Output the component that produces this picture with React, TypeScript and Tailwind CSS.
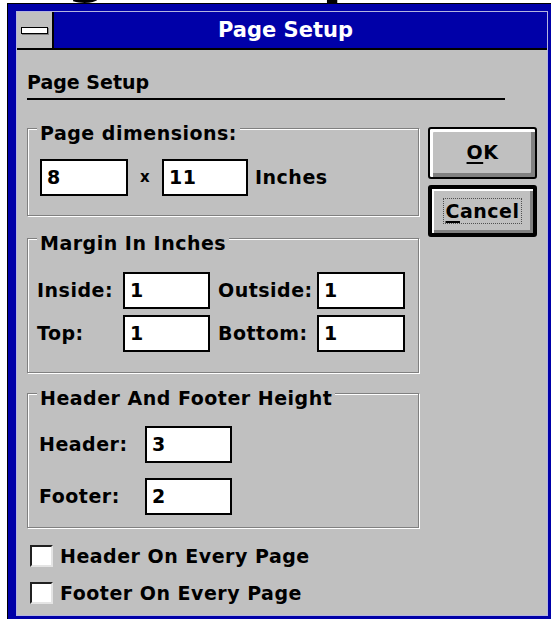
import React from 'react';

type FieldProps = { value: string; width: string };

// Sunken white edit box with a heavy black frame
const Field: React.FC<FieldProps> = ({ value, width }) => (
  <div className={`${width} h-[37px] border-2 border-black bg-white flex items-center pl-[5px] leading-none`}>
    {value}
  </div>
);

type GroupProps = { title: string; className: string; children: React.ReactNode };

// Etched group frame, the title sits on the top line
const GroupBox: React.FC<GroupProps> = ({ title, className, children }) => (
  <div className={`border border-[#808080] shadow-[inset_1px_1px_0_#ffffff,1px_1px_0_#ffffff] ${className}`}>
    <div className="mt-[-7px] ml-[9px] w-fit bg-[#c0c0c0] px-[3px] leading-[22px]">{title}</div>
    {children}
  </div>
);

const CheckRow: React.FC<{ label: string }> = ({ label }) => (
  <div className="flex items-center gap-[7px] h-[22px]">
    <div className="w-[23px] h-[22px] bg-white border-t-2 border-l-2 border-[#202020] border-r-2 border-b-2 border-r-[#e4e4e4] border-b-[#e4e4e4]" />
    <span className="leading-[22px]">{label}</span>
  </div>
);

export default function App() {
  return (
    <div className="min-h-screen bg-white font-['DejaVu_Sans',sans-serif] font-bold text-[19px] tracking-[0.5px] text-black overflow-hidden">
      {/* bottom of the page heading behind the dialog */}
      <div className="h-[3px] overflow-hidden">
        <div className="mt-[-59px] ml-[-15px] text-[59px] tracking-normal leading-none whitespace-nowrap">Page Setup</div>
      </div>

      {/* window frame */}
      <div className="ml-[7px] border-l border-t border-black bg-[#0000a8] pl-[8px] pt-[7px] pr-[3px] pb-[3px]">
        <div className="border border-[#b4b4e0]">
          {/* caption bar */}
          <div className="h-[38px] flex border-b-2 border-black bg-[#0000a8]">
            <div className="w-[37px] bg-[#c0c0c0] border-r-2 border-black flex items-center justify-center">
              <div className="w-[27px] h-[7px] bg-white border border-black shadow-[1px_1px_0_#808080]" />
            </div>
            <div className="flex-1 flex items-center justify-center pr-[30px] text-white text-[21px] tracking-normal leading-none">
              Page Setup
            </div>
          </div>

          {/* client area */}
          <div className="h-[565px] bg-[#c0c0c0] pl-[10px] pt-[21px]">
            <div className="leading-[22px] tracking-normal">Page Setup</div>
            <div className="mt-[5px] w-[478px] h-[2px] bg-black" />

            <div className="flex mt-[28px]">
              <div className="w-[392px] flex flex-col">
                <GroupBox title="Page dimensions:" className="h-[88px]">
                  <div className="mt-[15px] pl-[12px] flex items-center">
                    <Field value="8" width="w-[88px]" />
                    <div className="w-[34px] text-center text-[15px]">x</div>
                    <Field value="11" width="w-[86px]" />
                    <span className="ml-[7px]">Inches</span>
                  </div>
                </GroupBox>

                <GroupBox title="Margin In Inches" className="mt-[22px] h-[135px]">
                  <div className="mt-[18px] pl-[9px] flex flex-col gap-[6px]">
                    <div className="flex items-center">
                      <span className="w-[86px]">Inside:</span>
                      <Field value="1" width="w-[87px]" />
                      <span className="w-[107px] pl-[8px]">Outside:</span>
                      <Field value="1" width="w-[88px]" />
                    </div>
                    <div className="flex items-center">
                      <span className="w-[86px]">Top:</span>
                      <Field value="1" width="w-[87px]" />
                      <span className="w-[107px] pl-[8px]">Bottom:</span>
                      <Field value="1" width="w-[88px]" />
                    </div>
                  </div>
                </GroupBox>

                <GroupBox title="Header And Footer Height" className="mt-[20px] h-[135px]">
                  <div className="mt-[17px] pl-[11px] flex flex-col gap-[15px]">
                    <div className="flex items-center">
                      <span className="w-[106px]">Header:</span>
                      <Field value="3" width="w-[87px]" />
                    </div>
                    <div className="flex items-center">
                      <span className="w-[106px]">Footer:</span>
                      <Field value="2" width="w-[87px]" />
                    </div>
                  </div>
                </GroupBox>

                <div className="mt-[17px] pl-[3px] flex flex-col gap-[15px]">
                  <CheckRow label="Header On Every Page" />
                  <CheckRow label="Footer On Every Page" />
                </div>
              </div>

              {/* push buttons */}
              <div className="ml-[9px] mt-[-1px] flex flex-col gap-[6px]">
                <button className="w-[109px] h-[52px] rounded-[3px] border-2 border-black bg-[#c0c0c0] shadow-[inset_3px_3px_0_#ffffff,inset_-4px_-4px_0_#808080] flex items-center justify-center pb-[2px]">
                  <span>
                    <span className="underline decoration-2 underline-offset-[3px]">O</span>K
                  </span>
                </button>
                <button className="w-[109px] h-[52px] rounded-[3px] border-[4px] border-black bg-[#c0c0c0] shadow-[inset_2px_2px_0_#ffffff,inset_-3px_-3px_0_#808080] flex items-center justify-center">
                  <span className="border border-dotted border-[#505050] px-[2px] leading-[24px]">
                    <span className="underline decoration-2 underline-offset-[3px]">C</span>ancel
                  </span>
                </button>
              </div>
            </div>
          </div>
        </div>
      </div>
    </div>
  );
}
